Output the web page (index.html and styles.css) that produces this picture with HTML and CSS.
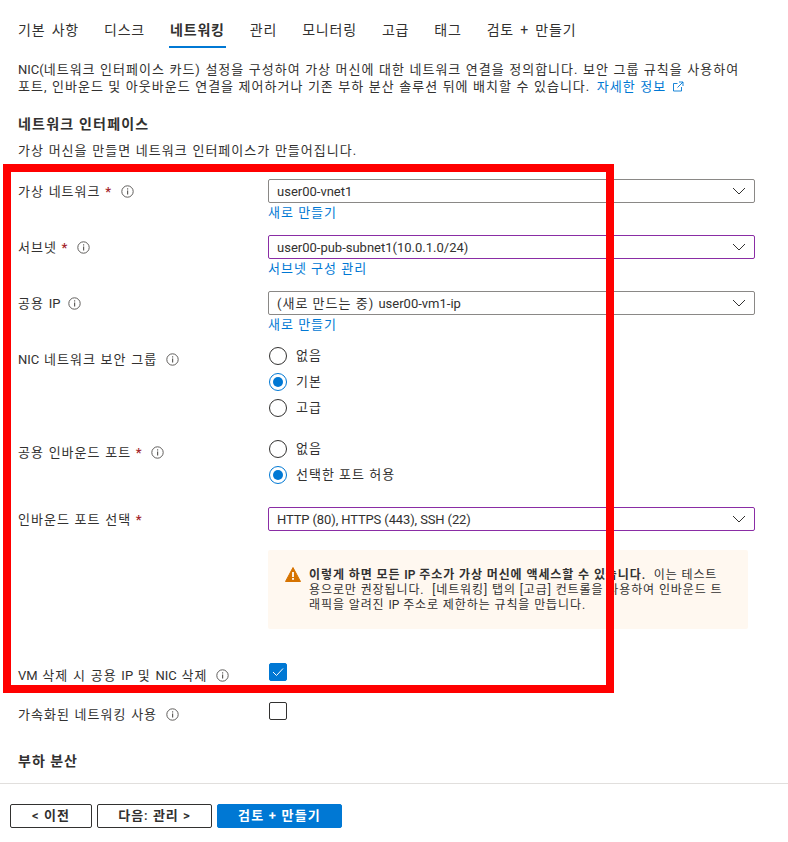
FILE: index.html
```html
<!DOCTYPE html>
<html lang="ko">
<head>
<meta charset="utf-8">
<title>네트워킹</title>
<link rel="stylesheet" href="styles.css">
</head>
<body>
<svg class="defs" width="0" height="0">
  <symbol id="info" viewBox="0 0 13 13">
    <circle cx="6.5" cy="6.5" r="5.7" fill="none" stroke="#605e5c" stroke-width="1"/>
    <rect x="6" y="5.5" width="1.2" height="4" fill="#605e5c"/>
    <rect x="6" y="3.3" width="1.2" height="1.2" fill="#605e5c"/>
  </symbol>
  <symbol id="chev" viewBox="0 0 14 8">
    <path d="M1 1l6 6 6-6" fill="none" stroke="#323130" stroke-width="1"/>
  </symbol>
</svg>
<main class="page">
  <nav class="tabs">
    <a class="tab">기본 사항</a>
    <a class="tab">디스크</a>
    <a class="tab active">네트워킹</a>
    <a class="tab">관리</a>
    <a class="tab">모니터링</a>
    <a class="tab">고급</a>
    <a class="tab">태그</a>
    <a class="tab">검토 + 만들기</a>
  </nav>
  <p class="intro"><span class="en">NIC(</span>네트워크 인터페이스 카드) 설정을 구성하여 가상 머신에 대한 네트워크 연결을 정의합니다. 보안 그룹 규칙을 사용하여<br>포트, 인바운드 및 아웃바운드 연결을 제어하거나 기존 부하 분산 솔루션 뒤에 배치할 수 있습니다. <a class="link more">자세한 정보 <svg class="ext" width="11" height="11" viewBox="0 0 11 11"><path d="M8.5 6v4h-8V2.500h4M6 1h4v4M10 1L4.500 6.500" fill="none" stroke="#0078d4" stroke-width="0.9"/></svg></a></p>
  <h2 class="heading">네트워크 인터페이스</h2>
  <p class="sub">가상 머신을 만들면 네트워크 인터페이스가 만들어집니다.</p>

  <div class="field f-link">
    <div class="label">가상 네트워크 <span class="req">*</span> <svg class="i"><use href="#info"/></svg></div>
    <div class="control">
      <div class="select"><span class="en">user00-vnet1</span><svg class="chev"><use href="#chev"/></svg></div>
      <a class="link block">새로 만들기</a>
    </div>
  </div>
  <div class="field f-link">
    <div class="label">서브넷 <span class="req">*</span> <svg class="i"><use href="#info"/></svg></div>
    <div class="control">
      <div class="select purple"><span class="en">user00-pub-subnet1(10.0.1.0/24)</span><svg class="chev"><use href="#chev"/></svg></div>
      <a class="link block">서브넷 구성 관리</a>
    </div>
  </div>
  <div class="field f-link">
    <div class="label">공용 <span class="en">IP</span> <svg class="i i-near"><use href="#info"/></svg></div>
    <div class="control">
      <div class="select"><span>(새로 만드는 중) <span class="en">user00-vm1-ip</span></span><svg class="chev"><use href="#chev"/></svg></div>
      <a class="link block">새로 만들기</a>
    </div>
  </div>
  <div class="field f-group">
    <div class="label"><span class="en">NIC</span> 네트워크 보안 그룹 <svg class="i"><use href="#info"/></svg></div>
    <div class="control radios">
      <div class="radio"><span class="dot"></span>없음</div>
      <div class="radio on"><span class="dot"></span>기본</div>
      <div class="radio"><span class="dot"></span>고급</div>
    </div>
  </div>
  <div class="field f-group">
    <div class="label">공용 인바운드 포트 <span class="req">*</span> <svg class="i"><use href="#info"/></svg></div>
    <div class="control radios">
      <div class="radio"><span class="dot"></span>없음</div>
      <div class="radio on"><span class="dot"></span>선택한 포트 허용</div>
    </div>
  </div>
  <div class="field f-select">
    <div class="label">인바운드 포트 선택 <span class="req">*</span></div>
    <div class="control">
      <div class="select purple"><span class="en tight">HTTP (80), HTTPS (443), SSH (22)</span><svg class="chev"><use href="#chev"/></svg></div>
    </div>
  </div>
  <div class="field f-warn">
    <div></div>
    <div class="warning">
      <svg class="warn-icon" width="16" height="15" viewBox="0 0 16 15"><path d="M8 .5L15.500 14.500H.5z" fill="#d67300" stroke="#d67300" stroke-linejoin="round"/><rect x="7.100" y="5" width="1.800" height="5" fill="#fff"/><rect x="7.100" y="11" width="1.800" height="1.800" fill="#fff"/></svg>
      <p class="warn-text"><b>이렇게 하면 모든 <span class="en">IP</span> 주소가 가상 머신에 액세스할 수 있습니다.</b>&nbsp; 이는 테스트<br>용으로만 권장됩니다.&nbsp; [네트워킹] 탭의 [고급] 컨트롤을 사용하여 인바운드 트<br>래픽을 알려진 <span class="en">IP</span> 주소로 제한하는 규칙을 만듭니다.</p>
    </div>
  </div>
  <div class="field f-check">
    <div class="label"><span class="en">VM</span> 삭제 시 공용 <span class="en">IP</span> 및 <span class="en">NIC</span> 삭제 <svg class="i"><use href="#info"/></svg></div>
    <div class="control"><span class="check on"><svg width="12" height="10" viewBox="0 0 12 10"><path d="M1 5l3.500 3.500L11 1.500" fill="none" stroke="#fff" stroke-width="1"/></svg></span></div>
  </div>
  <div class="field f-check2">
    <div class="label">가속화된 네트워킹 사용 <svg class="i"><use href="#info"/></svg></div>
    <div class="control"><span class="check"></span></div>
  </div>
  <h2 class="heading lb">부하 분산</h2>
  <footer class="footer">
    <button class="btn b1">&lt; 이전</button>
    <button class="btn b2">다음: 관리 &gt;</button>
    <button class="btn primary">검토 + 만들기</button>
  </footer>
</main>
<div class="highlight"></div>
</body>
</html>
```
FILE: styles.css
```css
* { box-sizing: border-box; }
html, body { margin: 0; padding: 0; background: #fff; }
body {
  font-family: Roboto, "Noto Sans CJK KR", sans-serif;
  font-size: 13px;
  line-height: 18px;
  letter-spacing: 1px;
  color: #323130;
  overflow: hidden;
  height: 842px;
  position: relative;
}
.en { letter-spacing: 0; }
.en.tight { letter-spacing: -.12px; }
.defs { position: absolute; }
.page { padding-top: 20px; }
.tabs { display: flex; gap: 25px; padding-left: 18px; height: 28px; }
.tab { font-size: 14px; height: 28px; line-height: 20px; letter-spacing: .8px; word-spacing: 2px; }
.tab.active { font-weight: 600; border-bottom: 2px solid #0078d4; margin: 0 -1px; padding: 0 1px; }
.intro { margin: 13px 18px 0; width: 760px; line-height: 17px; white-space: nowrap; word-spacing: .3px; }
.link { color: #0078d4; }
.more { margin-left: 2px; }
.block { display: block; line-height: 19px; }
.ext { vertical-align: -1px; margin-left: 2px; }
.heading { margin: 19px 18px 0; font-size: 14px; font-weight: 600; line-height: 20px; letter-spacing: 1.2px; }
.sub { margin: 8px 18px 19px; line-height: 18px; word-spacing: .5px; }
.field { display: grid; grid-template-columns: 250px 487px; padding-left: 18px; }
.f-link { height: 56px; }
.f-group { margin-bottom: 23px; }
.f-select { margin-bottom: 19px; }
.f-warn { margin-bottom: 34px; }
.f-check { margin-bottom: 21px; height: 18px; }
.f-check2 { height: 18px; }
.label { padding-top: 4px; white-space: nowrap; word-spacing: .5px; }
.req { color: #a4262c; font-weight: 600; }
.i { width: 13px; height: 13px; margin-left: 4px; vertical-align: -2px; }
.i-near { margin-left: 3px; }
.select {
  height: 24px;
  border: 1px solid #8a8886;
  border-radius: 2px;
  display: flex;
  align-items: center;
  justify-content: space-between;
  padding: 0 8px;
}
.select > span { padding-top: 2px; }
.select.purple { border-color: #8a2da5; }
.chev { width: 14px; height: 8px; }
.radios { display: flex; flex-direction: column; gap: 8px; }
.radio { display: flex; align-items: center; gap: 9px; padding-left: 1px; height: 18px; }
.dot { width: 18px; height: 18px; border: 1px solid #323130; border-radius: 50%; display: block; position: relative; }
.radio.on .dot { border-color: #0078d4; }
.radio.on .dot::after {
  content: "";
  position: absolute;
  left: 3px; top: 3px;
  width: 10px; height: 10px;
  border-radius: 50%;
  background: #0078d4;
}
.warning {
  width: 480px;
  height: 79px;
  background: #fff8f0;
  border-radius: 2px;
  display: flex;
  padding: 18px 20px 0 17px;
  gap: 8px;
}
.warn-icon { flex: none; margin-top: -1px; }
.warn-text { margin: 0; font-size: 12px; line-height: 15px; white-space: nowrap; letter-spacing: .9px; }
.warn-text b { font-weight: 600; }
.check {
  margin-left: 1px;
  width: 18px; height: 18px;
  border: 1px solid #323130;
  border-radius: 2px;
  display: flex;
  align-items: center;
  justify-content: center;
}
.check.on { background: #0078d4; border-color: #0078d4; }
.heading.lb { margin-top: 31px; letter-spacing: 1px; }
.footer {
  margin-top: 12px;
  border-top: 1px solid #e1dfdd;
  padding: 20px 0 0 10px;
  display: flex;
  gap: 5px;
}
.btn {
  font: inherit;
  letter-spacing: 1px;
  font-weight: 600;
  height: 24px;
  line-height: 20px;
  padding: 0;
  background: #fff;
  color: #323130;
  border: 1px solid #323130;
  border-radius: 2px;
}
.b1 { width: 82px; }
.b2 { width: 115px; }
.primary { width: 125px; background: #0078d4; border-color: #0078d4; color: #fff; letter-spacing: 1.2px; }
.highlight {
  position: absolute;
  left: 3px; top: 164px;
  width: 611px; height: 529px;
  border: 8px solid #f00;
}
```
